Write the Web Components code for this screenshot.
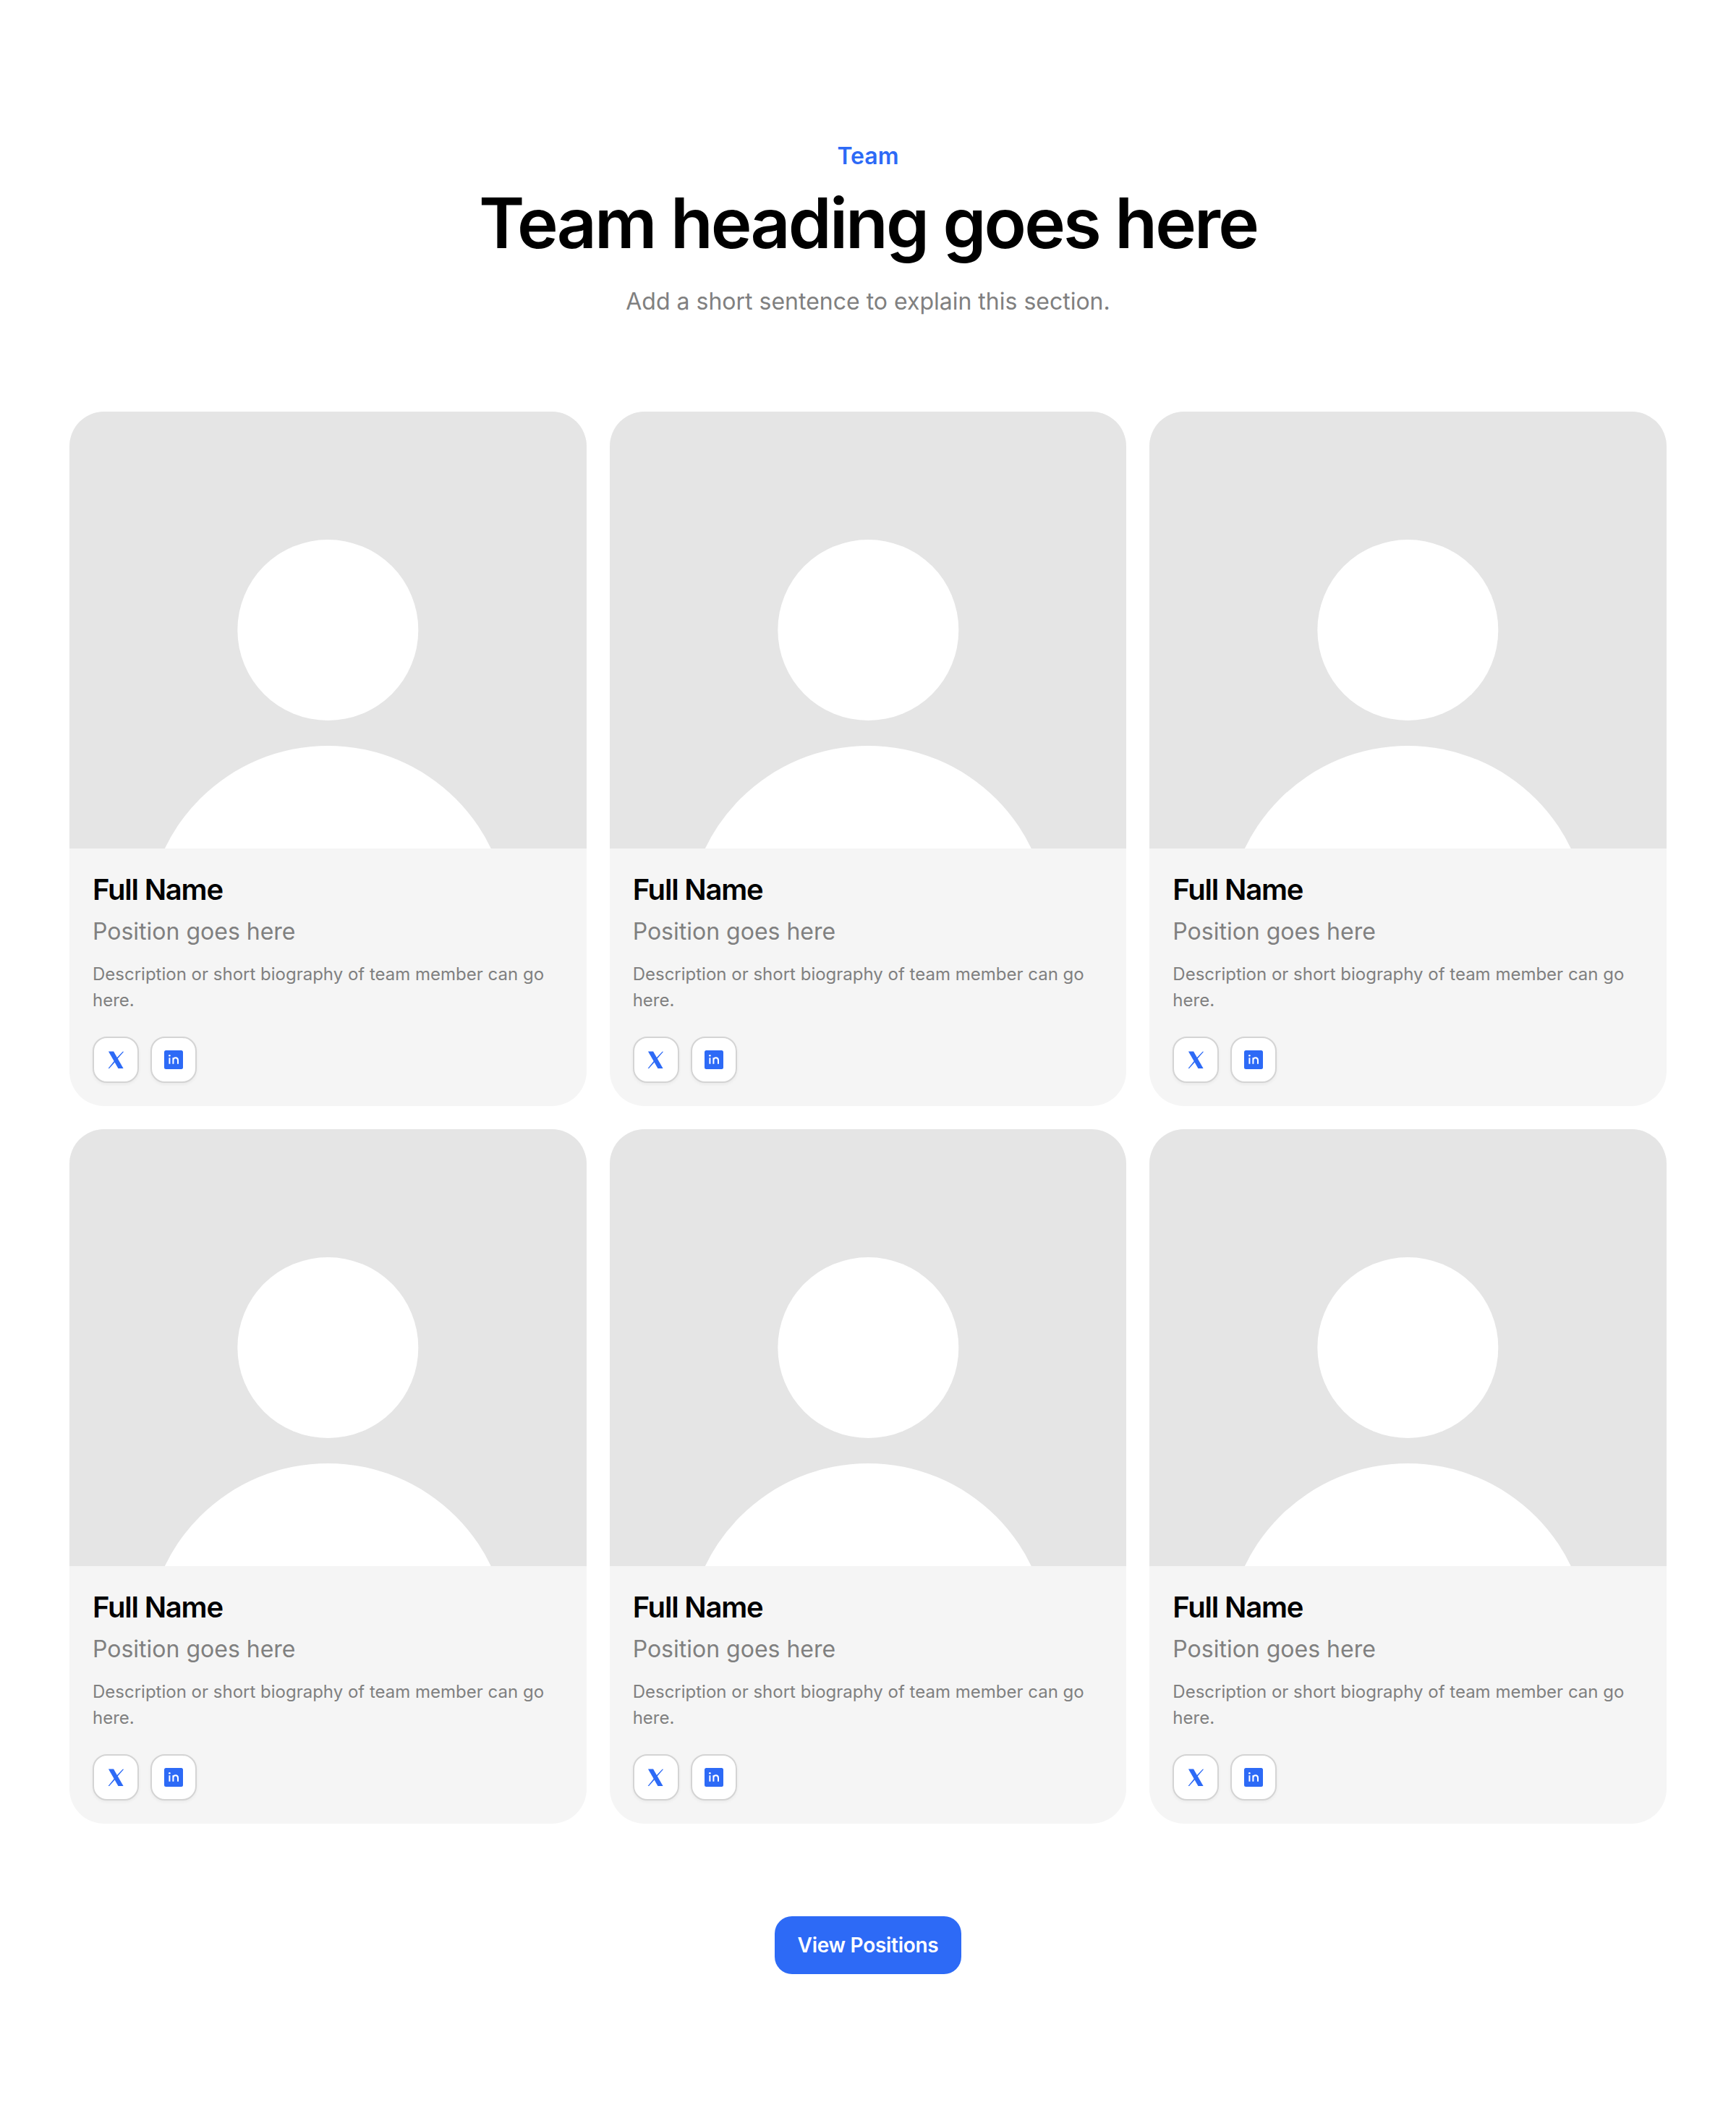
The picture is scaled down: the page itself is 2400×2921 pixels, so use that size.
<!DOCTYPE html>
<html lang="en">
<head>
<meta charset="utf-8">
<title>Team</title>
<style>
  html, body { margin: 0; background: #fff; }
  body { font-family: Inter, "Liberation Sans", sans-serif; }
</style>
</head>
<body>
<team-section>
  <span slot="eyebrow">Team</span>
  <span slot="title">Team heading goes here</span>
  <span slot="subtitle">Add a short sentence to explain this section.</span>
  <team-card></team-card>
  <team-card></team-card>
  <team-card></team-card>
  <team-card></team-card>
  <team-card></team-card>
  <team-card></team-card>
  <cta-button slot="action">View Positions</cta-button>
</team-section>

<script>
// Colors
const BLUE = "#2d6af6";
const MUTED = "#808080";

class TeamSection extends HTMLElement {
  constructor() {
    super();
    this.attachShadow({ mode: 'open' });
    this.shadowRoot.innerHTML = `
      <style>
        :host { display: block; box-sizing: border-box; width: 2400px; padding: 192px 96px; }
        header { display: flex; flex-direction: column; align-items: center; text-align: center; margin-bottom: 128px; }
        .eyebrow { font: 600 32px/48px Inter, sans-serif; color: ${BLUE}; margin-bottom: 16px; }
        h1 { margin: 0 0 32px; font: 600 96px/105px Inter, sans-serif; letter-spacing: -2.88px; color: #000; }
        .subtitle { font: 400 32px/48px Inter, sans-serif; color: ${MUTED}; }
        .grid { display: grid; grid-template-columns: repeat(3, 1fr); gap: 32px; }
        .action { display: flex; justify-content: center; margin-top: 128px; }
      </style>
      <header>
        <div class="eyebrow"><slot name="eyebrow"></slot></div>
        <h1><slot name="title"></slot></h1>
        <div class="subtitle"><slot name="subtitle"></slot></div>
      </header>
      <div class="grid"><slot></slot></div>
      <div class="action"><slot name="action"></slot></div>
    `;
  }
}

class TeamCard extends HTMLElement {
  constructor() {
    super();
    this.attachShadow({ mode: 'open' });
    this.shadowRoot.innerHTML = `
      <style>
        :host { display: block; background: #f5f5f5; border-radius: 48px; overflow: hidden; }
        .photo { display: block; width: 100%; height: 604px; background: #e5e5e5; }
        .body { padding: 32px; }
        h3 { margin: 0 0 9px; font: 600 40px/50px Inter, sans-serif; letter-spacing: -1.2px; color: #000; }
        .position { margin: 0 0 17px; font: 400 32px/48px Inter, sans-serif; color: ${MUTED}; }
        .bio { margin: 0 0 32px; font: 400 24px/36px Inter, sans-serif; color: ${MUTED}; }
        .links { display: flex; gap: 16px; }
      </style>
      <svg class="photo" viewBox="0 0 714.67 604" preserveAspectRatio="xMidYMin slice" aria-hidden="true">
        <circle cx="357.33" cy="302" r="125" fill="#fff"/>
        <circle cx="357.33" cy="712" r="250" fill="#fff"/>
      </svg>
      <div class="body">
        <h3>Full Name</h3>
        <p class="position">Position goes here</p>
        <p class="bio">Description or short biography of team member can go here.</p>
        <div class="links">
          <social-link kind="x"></social-link>
          <social-link kind="linkedin"></social-link>
        </div>
      </div>
    `;
  }
}

class SocialLink extends HTMLElement {
  constructor() {
    super();
    this.attachShadow({ mode: 'open' });
  }

  connectedCallback() {
    const icons = {
      x: `<svg width="22.5" height="24.5" viewBox="0 0 24 26">
            <path fill="${BLUE}" d="M1 .5h7.6L23 25.5h-7.6z"/>
            <path fill="${BLUE}" d="M22 .8h1.6L13.4 12.4l-1-1.6zM9.6 14.4l1 1.7L2.2 25.5H.6z"/>
          </svg>`,
      linkedin: `<svg width="26" height="26" viewBox="0 0 26 26">
            <rect width="26" height="26" rx="2.5" fill="${BLUE}"/>
            <circle cx="7.4" cy="7.2" r="1.3" fill="#fff"/>
            <path fill="none" stroke="#fff" stroke-width="2" d="M7.4 10.2v8.6M12.4 18.8v-8.6M12.4 14c0-2.5 1.6-3.7 3.4-3.7 2.1 0 3.2 1.4 3.2 3.6v4.9"/>
          </svg>`
    };
    this.shadowRoot.innerHTML = `
      <style>
        :host {
          display: flex; align-items: center; justify-content: center;
          box-sizing: border-box; width: 64px; height: 64px;
          background: #fff; border: 2px solid #d4d4d4; border-radius: 20px;
          box-shadow: 0 2px 4px rgba(0,0,0,0.05);
        }
        svg { display: block; }
      </style>
      ${icons[this.getAttribute('kind')] || ''}
    `;
  }
}

class CtaButton extends HTMLElement {
  constructor() {
    super();
    this.attachShadow({ mode: 'open' });
    this.shadowRoot.innerHTML = `
      <style>
        :host {
          display: inline-block; box-sizing: border-box; height: 80px; padding: 16px 32px;
          background: ${BLUE}; border-radius: 24px; color: #fff;
          font: 600 28px/48px Inter, sans-serif; letter-spacing: -0.28px;
        }
      </style>
      <slot></slot>
    `;
  }
}

customElements.define('team-section', TeamSection);
customElements.define('team-card', TeamCard);
customElements.define('social-link', SocialLink);
customElements.define('cta-button', CtaButton);
</script>
</body>
</html>
